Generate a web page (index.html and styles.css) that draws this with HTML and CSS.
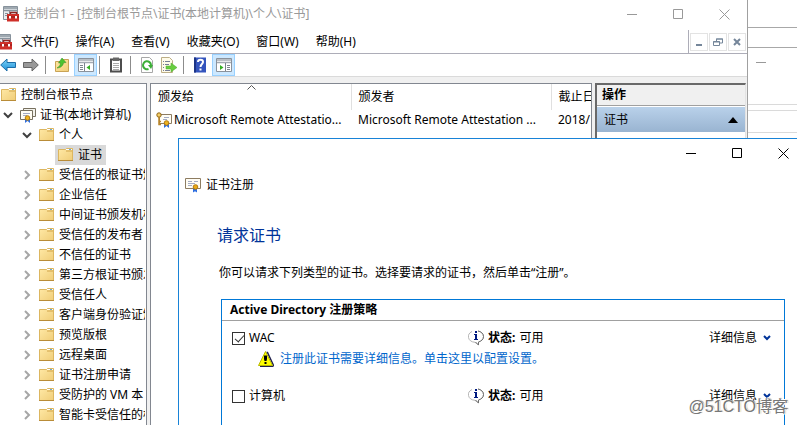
FILE: index.html
```
<!DOCTYPE html>
<html lang="zh-CN">

<head>
  <meta charset="UTF-8">
  <meta name="viewport" content="width=device-width, initial-scale=1.0">
  <title>控制台1</title>
  <link rel="stylesheet" href="styles.css">
</head>

<body>
  <!-- shared icons -->
  <svg class="defs" aria-hidden="true">
    <defs>
      <linearGradient id="gold" x1="0" y1="0" x2="1" y2="1">
        <stop offset="0" stop-color="#ffe9a6" />
        <stop offset="1" stop-color="#f0cd78" />
      </linearGradient>
      <linearGradient id="blue" x1="0" y1="0" x2="0" y2="1">
        <stop offset="0" stop-color="#7fd3f7" />
        <stop offset="1" stop-color="#1c8fd8" />
      </linearGradient>
      <symbol id="i-folder" viewBox="0 0 16 16">
        <path d="M.5 13.500v-11h7l1-1h6v12z" fill="url(#gold)" stroke="#dcb660" />
        <path d="M8 2.500h6" stroke="#fff" />
        <path d="M11 2.500h2" stroke="#6fa8c8" />
        <path d="M8 4h6" stroke="#d2a64c" />
        <path d="M0 13.500h15" stroke="#b98c38" />
      </symbol>
      <symbol id="i-mmc" viewBox="0 0 16 16">
        <path d="M.5.5h14v13H.5z" fill="#e8edf0" stroke="#87929c" />
        <path d="M1 2h13M1 4.500h13" stroke="#87929c" stroke-width="1.500" />
        <path d="M2 7.500h3M2 9.500h2M6.500 5v3" stroke="#87929c" />
        <path d="M7.500 8V6.500h6V8" fill="none" stroke="#8e2723" stroke-width="1.500" />
        <path d="M4 8h12v7.500H4z" fill="#cf2f29" />
        <path d="M4 11h12" stroke="#871a18" />
        <path d="M6 10h2v2.500H6zM12 10h2v2.500h-2z" fill="#fff" />
      </symbol>
      <symbol id="i-cert" viewBox="0 0 16 16">
        <path d="M.5 1.500h15v10H.5z" fill="#fffdf5" stroke="#8d7c61" />
        <path d="M3 4.500h4M9 4.500h4M3 6.500h7M3 8.500h4" stroke="#a3abc4" />
        <path d="M8 11v4.500l1.500-1 .500 0 .500 0 1.500 1V11z" fill="#2f6fe0" />
        <circle cx="10.500" cy="10" r="2.300" fill="#e9a916" stroke="#b37a10" />
      </symbol>
      <symbol id="i-certs" viewBox="0 0 16 16">
        <path d="M3.500 1.500h12v8h-12z" fill="#f3f2ec" stroke="#77705f" />
        <path d="M.5 3.500h12v9H.5z" fill="#fffdf5" stroke="#77705f" />
        <path d="M3 6.500h7M3 8.500h4" stroke="#a3abc4" />
        <path d="M5 11v5l2.500-2L10 16v-5z" fill="#2f6fe0" />
        <circle cx="7.500" cy="11" r="2.300" fill="#f0b41d" stroke="#b37a10" />
      </symbol>
      <symbol id="i-certkey" viewBox="0 0 16 16">
        <path d="M3.500 2.500h12v9h-12z" fill="#fffdf5" stroke="#8d7c61" />
        <path d="M8 5.500h5M7 7.500h4" stroke="#a3abc4" />
        <circle cx="3" cy="3" r="2.200" fill="#f6cf66" stroke="#8d641a" />
        <path d="M3 5v7.500h2M3 9.500h2" fill="none" stroke="#b98426" stroke-width="1.500" />
        <path d="M8 11v5l2.500-2 2.500 2v-5z" fill="#2f6fe0" />
        <circle cx="10.500" cy="11" r="2.300" fill="#f0b41d" stroke="#b37a10" />
      </symbol>
      <symbol id="i-arrow" viewBox="0 0 16 16">
        <path d="M.7 8L7 2v3.500h8.500v5H7V14z" />
      </symbol>
      <symbol id="i-open" viewBox="0 0 10 10">
        <path d="M1 3l4 4 4-4" fill="none" stroke="#404040" stroke-width="2" />
      </symbol>
      <symbol id="i-closed" viewBox="0 0 10 10">
        <path d="M3 1l4 4-4 4" fill="none" stroke="#a6a6a6" stroke-width="2" />
      </symbol>
      <symbol id="i-min" viewBox="0 0 11 11">
        <path d="M0 5.500h10" fill="none" stroke="currentColor" />
      </symbol>
      <symbol id="i-max" viewBox="0 0 11 11">
        <path d="M.5.5h9v9h-9z" fill="none" stroke="currentColor" />
      </symbol>
      <symbol id="i-close" viewBox="0 0 11 11">
        <path d="M.5.5l10 10M10.500.5l-10 10" fill="none" stroke="currentColor" />
      </symbol>
      <symbol id="i-info" viewBox="0 0 16 16">
        <path d="M4 1.500C1 3 0 5 .5 7.500c.5 3 3 4.500 6.500 4.800L10.500 15v-3c3-1 5-2.800 5-5.500S13 1.500 10 1" fill="#fff"
          stroke="#b4b4b4" />
        <path d="M10 1c3 .5 5.500 2.500 5.500 5.500s-2 4.500-5 5.500v3L7.500 12" fill="none" stroke="#707070" />
        <path d="M7 1h2v2H7zM6 4h3v5h1v1H6V9h1V5H6z" fill="#001a80" />
      </symbol>
      <symbol id="i-warn" viewBox="0 0 16 16">
        <path d="M8.500 1.500h1l6 13-1 1H2" fill="none" stroke="#22224d" stroke-width="1.500" />
        <path d="M7.500.5L.5 14.500h14z" fill="#ff0" stroke="#b8b800" />
        <path d="M6 4.500h3V8l-.5 2h-2L6 8zM6.500 11h2v2h-2z" fill="#000" />
      </symbol>
    </defs>
  </svg>

  <div class="desktop">
    <main class="console">
      <header class="titlebar">
        <svg class="icon"><use href="#i-mmc" /></svg>
        <span class="caption">控制台1 - [控制台根节点\证书(本地计算机)\个人\证书]</span>
        <div class="winbtns">
          <button aria-label="最小化"><svg><use href="#i-min" /></svg></button>
          <button aria-label="最大化"><svg><use href="#i-max" /></svg></button>
          <button aria-label="关闭"><svg><use href="#i-close" /></svg></button>
        </div>
      </header>

      <nav class="menubar">
        <svg class="icon"><use href="#i-mmc" /></svg>
        <button>文件(F)</button>
        <button>操作(A)</button>
        <button>查看(V)</button>
        <button>收藏夹(O)</button>
        <button>窗口(W)</button>
        <button>帮助(H)</button>
        <div class="mdi">
          <button aria-label="最小化"><svg viewBox="0 0 10 10"><path d="M2 8h6" stroke-width="2" /></svg></button>
          <button aria-label="还原"><svg viewBox="0 0 10 10"><path d="M3.500 4V2h6v4H7M3 2h7M.5 4.500h6v4h-6zM0 5h7" /></svg></button>
          <button aria-label="关闭"><svg viewBox="0 0 10 10"><path d="M2 2l6 6M8 2L2 8" stroke-width="2" /></svg></button>
        </div>
      </nav>

      <div class="toolbar">
        <button aria-label="后退"><svg class="icon back"><use href="#i-arrow" /></svg></button>
        <button aria-label="前进"><svg class="icon forward"><use href="#i-arrow" /></svg></button>
        <i class="sep"></i>
        <button aria-label="上移"><svg class="icon" viewBox="0 0 16 16">
            <path d="M1.500 14.500v-10h7l1-2h5v12z" fill="url(#gold)" stroke="#c9a355" />
            <path d="M3 11c2-1 3.500-3 3.500-5H4.500L8 1l4 4.500-2.500.3C9 9 6.500 11 3 11z" fill="#4cc32f" stroke="#2f8b20" stroke-width=".5" />
          </svg></button>
        <button class="on" aria-label="显示/隐藏控制台树"><svg class="icon" viewBox="0 0 16 16">
            <path d="M.5 1.500h15v13H.5z" fill="#fff" stroke="#8a929c" />
            <path d="M1 3h14M1 5.500h14" stroke="#a3aab3" stroke-width="1.500" />
            <path d="M6.500 6v8M2 8.500h3M2 10.500h3M2 12.500h3" stroke="#7b848e" />
            <path d="M12 8v5L8.500 10.500z" fill="#35ae24" />
          </svg></button>
        <i class="sep near"></i>
        <button aria-label="粘贴"><svg class="icon" viewBox="0 0 16 16">
            <path d="M3 2.500h10v12H3z" fill="#fff" stroke="#4d4d4d" stroke-width="2" />
            <path d="M5 .5h6V4H5z" fill="#666" />
            <path d="M5 6.500h6M5 8.500h6M5 10.500h6M5 12.500h6" stroke="#aaa" />
          </svg></button>
        <i class="sep"></i>
        <button aria-label="刷新"><svg class="icon" viewBox="0 0 16 16">
            <path d="M2.500.5h8l3 3v12h-11z" fill="#fff" stroke="#a7a7a7" />
            <path d="M9.500 12A4 4 0 1 1 12 8" fill="none" stroke="#3cae38" stroke-width="2" />
            <path d="M9 8h5l-2 4z" fill="#3cae38" />
          </svg></button>
        <button aria-label="导出列表"><svg class="icon" viewBox="0 0 16 16">
            <path d="M.5.5h8l3 3v12H.5z" fill="#fffbe9" stroke="#bcae86" />
            <path d="M2 4.500h1M4 4.500h5M2 7.500h1M4 7.500h4M2 10.500h1M2 13.500h1M4 13.500h5" stroke="#777f95" />
            <path d="M5 9h5V6l6 4.500L10 15v-3H5z" fill="#69ce40" stroke="#4da82c" stroke-width=".5" />
          </svg></button>
        <i class="sep"></i>
        <button aria-label="帮助"><svg class="icon" viewBox="0 0 16 16">
            <path d="M2 .5h12v15H2z" fill="#3454bd" />
            <path d="M2 .5h2v15H2z" fill="#1c3486" />
            <path d="M6 5c0-3 5-3 5 0 0 2-2.500 2-2.500 5M7.500 12.500h2" fill="none" stroke="#fff" stroke-width="2" />
          </svg></button>
        <button class="on" aria-label="显示/隐藏操作窗格"><svg class="icon" viewBox="0 0 16 16">
            <path d="M.5 1.500h15v13H.5z" fill="#fff" stroke="#8a929c" />
            <path d="M1 3h14M1 5.500h14" stroke="#a3aab3" stroke-width="1.500" />
            <path d="M9.500 6v8M11 8.500h3M11 10.500h3M11 12.500h3" stroke="#7b848e" />
            <path d="M4 8v5l3.500-2.500z" fill="#35ae24" />
          </svg></button>
      </div>

      <div class="panes">
        <ul class="tree">
          <li class="lvl0"><svg class="icon"><use href="#i-folder" /></svg>控制台根节点</li>
          <li class="lvl1"><svg class="twist"><use href="#i-open" /></svg><svg class="icon"><use href="#i-certs" /></svg>证书(本地计算机)</li>
          <li><svg class="twist"><use href="#i-open" /></svg><svg class="icon"><use href="#i-folder" /></svg>个人</li>
          <li class="lvl3"><span class="selected"><svg class="icon"><use href="#i-folder" /></svg>证书</span></li>
          <li><svg class="twist"><use href="#i-closed" /></svg><svg class="icon"><use href="#i-folder" /></svg>受信任的根证书颁</li>
          <li><svg class="twist"><use href="#i-closed" /></svg><svg class="icon"><use href="#i-folder" /></svg>企业信任</li>
          <li><svg class="twist"><use href="#i-closed" /></svg><svg class="icon"><use href="#i-folder" /></svg>中间证书颁发机构</li>
          <li><svg class="twist"><use href="#i-closed" /></svg><svg class="icon"><use href="#i-folder" /></svg>受信任的发布者</li>
          <li><svg class="twist"><use href="#i-closed" /></svg><svg class="icon"><use href="#i-folder" /></svg>不信任的证书</li>
          <li><svg class="twist"><use href="#i-closed" /></svg><svg class="icon"><use href="#i-folder" /></svg>第三方根证书颁发</li>
          <li><svg class="twist"><use href="#i-closed" /></svg><svg class="icon"><use href="#i-folder" /></svg>受信任人</li>
          <li><svg class="twist"><use href="#i-closed" /></svg><svg class="icon"><use href="#i-folder" /></svg>客户端身份验证颁</li>
          <li><svg class="twist"><use href="#i-closed" /></svg><svg class="icon"><use href="#i-folder" /></svg>预览版根</li>
          <li><svg class="twist"><use href="#i-closed" /></svg><svg class="icon"><use href="#i-folder" /></svg>远程桌面</li>
          <li><svg class="twist"><use href="#i-closed" /></svg><svg class="icon"><use href="#i-folder" /></svg>证书注册申请</li>
          <li><svg class="twist"><use href="#i-closed" /></svg><svg class="icon"><use href="#i-folder" /></svg>受防护的 VM 本</li>
          <li><svg class="twist"><use href="#i-closed" /></svg><svg class="icon"><use href="#i-folder" /></svg>智能卡受信任的根</li>
        </ul>

        <div class="list">
          <table>
            <thead>
              <tr>
                <th>颁发给<svg class="sort" viewBox="0 0 9 5"><path d="M.5 4.500l4-4 4 4" fill="none" stroke="#555" /></svg></th>
                <th>颁发者</th>
                <th class="date">截止日</th>
              </tr>
            </thead>
            <tbody>
              <tr>
                <td class="name"><svg class="icon"><use href="#i-certkey" /></svg>Microsoft Remote Attestatio...</td>
                <td>Microsoft Remote Attestation ...</td>
                <td class="date">2018/</td>
              </tr>
            </tbody>
          </table>
        </div>

        <aside class="actions">
          <h2>操作</h2>
          <button class="group">证书<svg viewBox="0 0 10 6"><path d="M5 0l5 6H0z" /></svg></button>
        </aside>
      </div>
    </main>

    <div class="behind">
      <div class="b-title"></div>
      <div class="b-bar"></div>
      <div class="b-tools"><svg><use href="#i-min" /></svg></div>
      <div class="b-gap"></div>
      <div class="b-row"></div>
    </div>
  </div>

  <section class="dialog">
    <div class="winbtns">
      <button aria-label="最小化"><svg><use href="#i-min" /></svg></button>
      <button aria-label="最大化"><svg><use href="#i-max" /></svg></button>
      <button aria-label="关闭"><svg><use href="#i-close" /></svg></button>
    </div>
    <div class="wizard"><svg class="icon"><use href="#i-cert" /></svg>证书注册</div>
    <div class="content">
      <h1>请求证书</h1>
      <p>你可以请求下列类型的证书。选择要请求的证书，然后单击“注册”。</p>
      <div class="policy">
        <h3>Active Directory 注册策略</h3>
        <div class="template">
          <label><input type="checkbox" checked>WAC</label>
          <div class="status"><svg class="icon"><use href="#i-info" /></svg><b>状态:</b> 可用</div>
          <button class="details">详细信息<svg viewBox="0 0 8 6"><path d="M1 1l3 3 3-3" /></svg></button>
        </div>
        <div class="notice"><svg class="icon"><use href="#i-warn" /></svg><a href="#">注册此证书需要详细信息。单击这里以配置设置。</a></div>
        <div class="template">
          <label><input type="checkbox">计算机</label>
          <div class="status"><svg class="icon"><use href="#i-info" /></svg><b>状态:</b> 可用</div>
          <button class="details">详细信息<svg viewBox="0 0 8 6"><path d="M1 1l3 3 3-3" /></svg></button>
        </div>
      </div>
    </div>
  </section>

  <div class="watermark">@51CTO博客</div>
</body>

</html>
```
FILE: styles.css
```
* {
  box-sizing: border-box;
  margin: 0;
  padding: 0;
}

body {
  position: relative;
  height: 100vh;
  overflow: hidden;
  background: #fff;
  color: #000;
  font: 12px/20px "Noto Sans", "Noto Sans CJK SC", sans-serif;
}

button {
  border: 0;
  background: none;
  color: inherit;
  font: inherit;
}

svg {
  display: block;
  flex: none;
}

.defs {
  position: absolute;
  width: 0;
  height: 0;
}

.icon {
  width: 16px;
  height: 16px;
}

.desktop {
  display: flex;
  height: 100%;
}

/* console window */
.console {
  flex: 1;
  min-width: 0;
  display: flex;
  flex-direction: column;
  background: #f0f0f0;
}

.titlebar {
  display: flex;
  align-items: center;
  height: 28px;
  padding-left: 3px;
  background: #fff;
  color: #999;
}

.caption {
  flex: 1;
  margin-left: 5px;
  white-space: nowrap;
}

.winbtns {
  display: flex;
}

.winbtns button {
  display: flex;
  align-items: center;
  justify-content: center;
  width: 46px;
  height: 28px;
}

.winbtns svg {
  width: 11px;
  height: 11px;
}

.menubar {
  display: flex;
  align-items: center;
  gap: 1px;
  height: 26px;
  padding-top: 2px;
  border-bottom: 1px solid #adadb8;
  background: #fff;
}

.menubar > .icon {
  margin-left: -4px;
}

.menubar > button {
  padding: 0 8px;
  white-space: nowrap;
}

.mdi {
  display: flex;
  align-items: center;
  gap: 1px;
  height: 23px;
  margin-left: auto;
  padding: 0 1px;
  border-left: 1px solid #adadb8;
}

.mdi button {
  display: flex;
  align-items: center;
  justify-content: center;
  width: 18px;
  height: 18px;
  border: 1px solid #e3e3e3;
}

.mdi svg {
  width: 10px;
  height: 10px;
  fill: none;
  stroke: #75869a;
}

.toolbar {
  display: flex;
  align-items: center;
  height: 23px;
  border-bottom: 1px solid #dadada;
  background: #fff;
}

.toolbar button {
  display: flex;
  align-items: center;
  justify-content: center;
  width: 22px;
  height: 22px;
}

.toolbar button:first-child {
  width: 20px;
  padding-right: 4px;
}

.toolbar .on {
  width: 23px;
  margin-left: 1px;
  border: 1px solid #99d1ff;
  background: #cce8ff;
}

.sep {
  width: 1px;
  height: 18px;
  margin: 0 5px 0 3px;
  background: #8c8c8c;
}

.sep.near {
  margin-left: 2px;
}

.back {
  fill: url(#blue);
  stroke: #1d6da8;
}

.forward {
  fill: #999;
  stroke: #666;
  transform: scaleX(-1);
}

.panes {
  flex: 1;
  min-height: 0;
  display: flex;
  gap: 3px;
  padding: 6px 1px 0 0;
}

.tree {
  width: 147px;
  padding-top: 1px;
  border: solid #828790;
  border-width: 1px 1px 0 0;
  background: #fff;
  overflow: hidden;
  list-style: none;
}

.tree li {
  display: flex;
  align-items: center;
  width: 145px;
  height: 20px;
  padding-left: 22px;
  overflow: hidden;
  white-space: nowrap;
}

.tree .icon {
  margin-right: 4px;
}

.twist {
  width: 10px;
  height: 10px;
  margin-right: 7px;
}

.tree .lvl0 {
  padding-left: 1px;
}

.tree .lvl1 {
  padding-left: 3px;
}

.tree .lvl3 {
  padding-left: 55px;
}

.selected {
  display: flex;
  align-items: center;
  height: 20px;
  padding: 0 4px 0 3px;
  background: #d9d9d9;
}

.list {
  flex: 1;
  min-width: 0;
  border: solid #828790;
  border-width: 1px 1px 0;
  background: #fff;
  overflow: hidden;
}

.list table {
  width: 100%;
  border-collapse: collapse;
  table-layout: fixed;
}

.list th {
  position: relative;
  height: 26px;
  padding-left: 7px;
  border-right: 1px solid #e0e0e0;
  font-weight: normal;
  text-align: left;
}

.list td {
  height: 20px;
  padding-left: 7px;
  white-space: nowrap;
}

.list .name {
  display: flex;
  align-items: center;
  gap: 2px;
  padding-left: 5px;
}

.list .date {
  width: 40px;
  border: 0;
  overflow: hidden;
  white-space: nowrap;
}

.sort {
  position: absolute;
  top: 1px;
  left: 48%;
  width: 9px;
  height: 5px;
}

.actions {
  width: 151px;
  border: solid #696969;
  border-width: 2px 0 0 2px;
  border-right: 1px solid #e3e3e3;
  background: #fff;
}

.actions h2 {
  height: 21px;
  padding-left: 5px;
  border-bottom: 1px solid #a0a0a0;
  background: #f0f0f0;
  font-size: 12px;
  line-height: 20px;
}

.group {
  display: flex;
  align-items: center;
  justify-content: space-between;
  width: 100%;
  height: 25px;
  margin-top: 1px;
  padding: 0 7px;
  background: linear-gradient(#b9d1ea, #99b4d1);
}

.group svg {
  width: 10px;
  height: 6px;
}

/* window at the back */
.behind {
  width: 50px;
  border-left: 1px solid #a0a0a0;
  background: #fff;
}

.b-title {
  height: 28px;
  border-bottom: 1px solid #a8a8a8;
}

.b-bar {
  height: 20px;
  border-bottom: 1px solid #a8a8a8;
}

.b-tools {
  height: 57px;
  padding: 9px 8px;
  border-bottom: 1px solid #dadada;
  color: #999;
}

.b-tools svg {
  width: 11px;
  height: 11px;
}

.b-gap {
  height: 6px;
  border-bottom: 1px solid #dadada;
}

.b-row {
  height: 22px;
  border-bottom: 1px solid #dadada;
}

/* certificate enrollment, floats over the console */
.dialog {
  position: absolute;
  top: 138px;
  right: 0;
  bottom: 0;
  left: 178px;
  border: solid #1883d7;
  border-width: 1px 0 0 1px;
  background: #fff;
  overflow: hidden;
}

.dialog .winbtns {
  justify-content: flex-end;
  margin-right: -9px;
}

.wizard {
  display: flex;
  align-items: center;
  gap: 5px;
  padding: 8px 6px;
}

.content {
  padding: 20px 12px 0 42px;
}

h1 {
  padding-bottom: 16px;
  margin-left: -4px;
  color: #039;
  font-size: 16px;
  font-weight: normal;
  line-height: 24px;
}

.content p {
  margin-left: -2px;
  padding-bottom: 16px;
}

.policy {
  height: 200px;
  border: 1px solid #0078d7;
}

.policy h3 {
  padding-left: 8px;
  border-bottom: 1px solid #a0a0a0;
  font-size: 12px;
  line-height: 20px;
}

.template {
  display: grid;
  grid-template-columns: 236px 1fr auto;
  align-items: center;
  padding: 7px 13px 0 10px;
}

.template label,
.status,
.notice {
  display: flex;
  align-items: center;
  gap: 4px;
}

.template input {
  appearance: none;
  position: relative;
  width: 13px;
  height: 13px;
  border: 1px solid #333;
  background: #fff;
}

.template input:checked::after {
  content: "";
  position: absolute;
  top: 0;
  left: 4px;
  width: 4px;
  height: 8px;
  border: solid #333;
  border-width: 0 1px 1px 0;
  transform: rotate(42deg);
}

.details {
  display: flex;
  align-items: center;
  gap: 6px;
}

.details svg {
  width: 8px;
  height: 6px;
  fill: none;
  stroke: #039;
  stroke-width: 2;
}

.notice {
  gap: 6px;
  padding: 1px 0 10px 36px;
}

.notice a {
  color: #06c;
  text-decoration: none;
}

.watermark {
  position: absolute;
  right: 9px;
  bottom: 8px;
  color: #777;
  font: 16px/20px "Liberation Sans", "Noto Sans CJK SC", sans-serif;
  text-shadow: 1px 1px 0 #fff, -1px -1px 0 #fff, 1px 0 1px #888;
}
```
